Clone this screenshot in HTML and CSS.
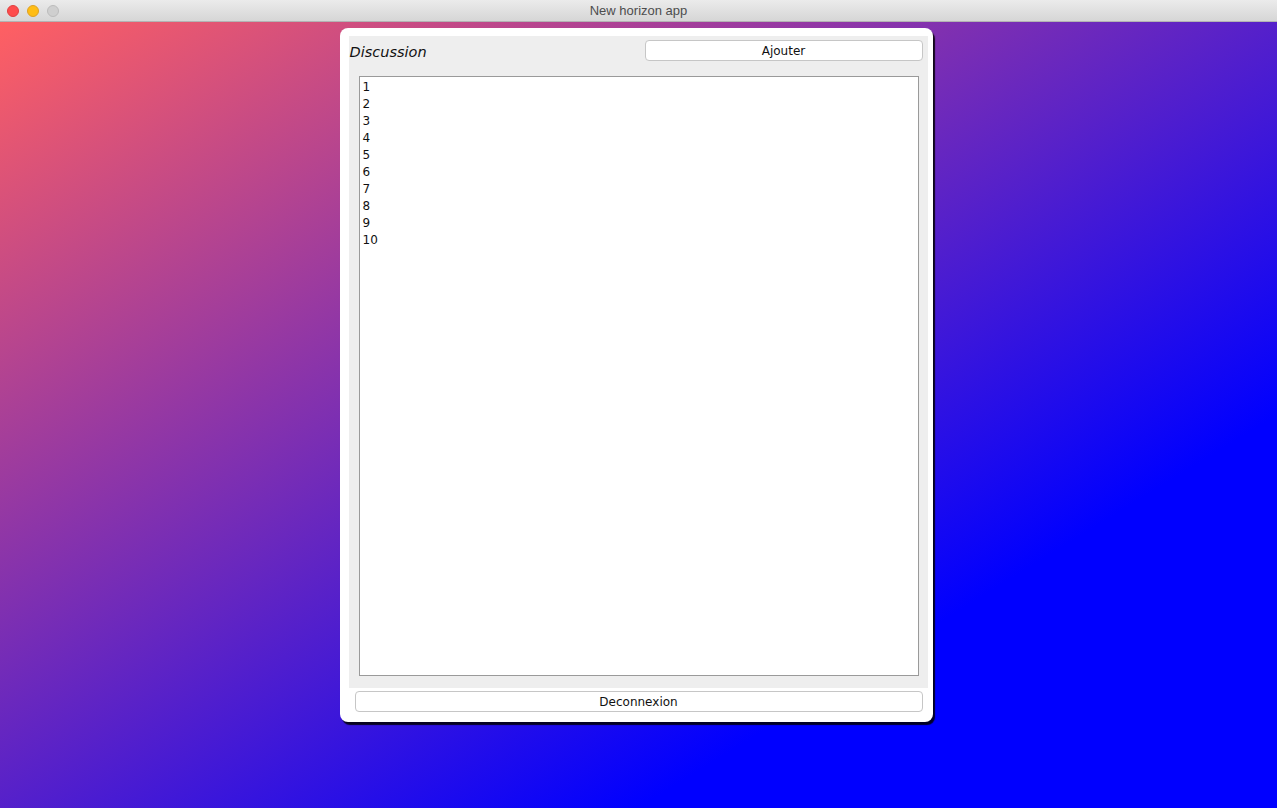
FILE: index.html
```html
<!DOCTYPE html>
<html lang="fr">
<head>
<meta charset="utf-8">
<title>New horizon app</title>
<link rel="stylesheet" href="styles.css">
</head>
<body>
<div class="window">
  <header class="titlebar">
    <div class="lights">
      <span class="light red"></span>
      <span class="light yellow"></span>
      <span class="light gray"></span>
    </div>
    <div class="title">New horizon app</div>
  </header>
  <main class="desktop">
    <section class="card">
      <div class="panel">
        <div class="panel-head">
          <h1 class="heading">Discussion</h1>
          <button class="btn btn-add">Ajouter</button>
        </div>
        <ul class="list">
          <li>1</li>
          <li>2</li>
          <li>3</li>
          <li>4</li>
          <li>5</li>
          <li>6</li>
          <li>7</li>
          <li>8</li>
          <li>9</li>
          <li>10</li>
        </ul>
      </div>
      <div class="foot">
        <button class="btn btn-logout">Deconnexion</button>
      </div>
    </section>
  </main>
</div>
</body>
</html>
```

FILE: styles.css
```css
html, body {
  margin: 0;
  padding: 0;
  height: 100%;
}
body {
  font-family: "DejaVu Sans", "Liberation Sans", sans-serif;
  overflow: hidden;
}
.window {
  display: flex;
  flex-direction: column;
  height: 808px;
}
.titlebar {
  height: 22px;
  flex: 0 0 22px;
  box-sizing: border-box;
  background: linear-gradient(to bottom, #ebebeb, #d6d6d6);
  border-bottom: 1px solid #b3b3b3;
  display: flex;
  align-items: center;
  position: relative;
}
.lights {
  display: flex;
  gap: 8px;
  padding-left: 7px;
}
.light {
  width: 12px;
  height: 12px;
  border-radius: 50%;
  box-sizing: border-box;
}
.light.red { background: #fe4c4c; border: 1px solid #e0403f; }
.light.yellow { background: #ffbd14; border: 1px solid #dea123; }
.light.gray { background: #cfcfcf; border: 1px solid #bcbcbc; }
.title {
  position: absolute;
  left: 0;
  right: 0;
  top: 0;
  height: 22px;
  line-height: 22px;
  text-align: center;
  font-family: "Liberation Sans", "DejaVu Sans", sans-serif;
  font-size: 13px;
  color: #4d4d4d;
  pointer-events: none;
}
.desktop {
  flex: 1;
  background: linear-gradient(to bottom right, #ff6062 0%, #0000ff 75%, #0000ff 100%);
  display: flex;
  justify-content: center;
  align-items: flex-start;
  padding-top: 6px;
}
.card {
  width: 593px;
  height: 694px;
  margin-left: -5px;
  box-sizing: border-box;
  background: #ffffff;
  border-radius: 8px;
  box-shadow: 2px 3px 1px rgba(0, 0, 0, 0.85);
  padding: 8px 5px 10px 9px;
  display: flex;
  flex-direction: column;
}
.panel {
  flex: 1;
  background: #eeeeee;
  display: flex;
  flex-direction: column;
  padding: 4px 6px 12px 1px;
  min-height: 0;
}
.panel-head {
  display: flex;
  align-items: center;
  justify-content: space-between;
  height: 21px;
}
.heading {
  margin: 0;
  font-size: 14.5px;
  font-style: italic;
  font-weight: normal;
  color: #111;
  padding-top: 3px;
}
.btn {
  font-family: "DejaVu Sans", "Liberation Sans", sans-serif;
  font-size: 12px;
  color: #111;
  background: #ffffff;
  border: 1px solid #c6c6c6;
  border-radius: 4px;
  height: 21px;
  padding: 0;
  margin: 0;
}
.btn-add {
  width: 278px;
  margin-right: -1px;
}
.list {
  list-style: none;
  margin: 15px 3px 0 9px;
  padding: 2px 3px;
  flex: 1;
  background: #ffffff;
  border: 1px solid #9a9a9a;
  font-size: 12px;
  line-height: 17px;
  color: #111;
}
.foot {
  display: flex;
  padding: 3px 5px 0 6px;
}
.btn-logout {
  flex: 1;
}
```
